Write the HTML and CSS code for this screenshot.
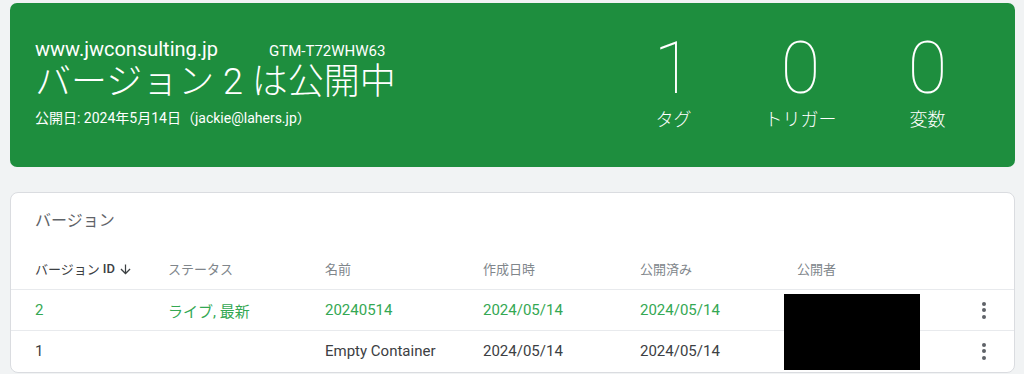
FILE: index.html
```html
<!DOCTYPE html>
<html lang="ja">
<head>
<meta charset="utf-8">
<link rel="stylesheet" href="styles.css">
</head>
<body>
<div class="page">
  <section class="hero">
    <div class="hero-info">
      <div class="hero-top">
        <span class="domain">www.jwconsulting.jp</span>
        <span class="gtm">GTM-T72WHW63</span>
      </div>
      <h1 class="hero-title">バージョン 2 は公開中</h1>
      <div class="hero-date">公開日: 2024年5月14日（jackie@lahers.jp）</div>
    </div>
    <div class="stats">
      <div class="stat"><div class="stat-num">1</div><div class="stat-label">タグ</div></div>
      <div class="stat"><div class="stat-num">0</div><div class="stat-label">トリガー</div></div>
      <div class="stat"><div class="stat-num">0</div><div class="stat-label">変数</div></div>
    </div>
  </section>

  <section class="versions">
    <h2 class="versions-title">バージョン</h2>
    <div class="row head">
      <div class="cell sorted">バージョン <b>ID</b> <svg class="arrow" viewBox="0 0 24 24" width="15" height="15"><path d="M20 12l-1.41-1.41L13 16.17V4h-2v12.17l-5.58-5.59L4 12l8 8 8-8z" fill="#3c4043"/></svg></div>
      <div class="cell">ステータス</div>
      <div class="cell">名前</div>
      <div class="cell">作成日時</div>
      <div class="cell">公開済み</div>
      <div class="cell">公開者</div>
      <div class="cell"></div>
    </div>
    <div class="row live">
      <div class="cell">2</div>
      <div class="cell">ライブ, 最新</div>
      <div class="cell">20240514</div>
      <div class="cell">2024/05/14</div>
      <div class="cell">2024/05/14</div>
      <div class="cell"></div>
      <div class="cell menu"><span class="kebab"><i></i><i></i><i></i></span></div>
    </div>
    <div class="row">
      <div class="cell">1</div>
      <div class="cell"></div>
      <div class="cell">Empty Container</div>
      <div class="cell">2024/05/14</div>
      <div class="cell">2024/05/14</div>
      <div class="cell"></div>
      <div class="cell menu"><span class="kebab"><i></i><i></i><i></i></span></div>
    </div>
    <div class="redact"></div>
  </section>
</div>
</body>
</html>
```

FILE: styles.css
```css
* { box-sizing: border-box; }
html, body {
  margin: 0;
  padding: 0;
  background: #f1f3f4;
  font-family: Roboto, "Noto Sans CJK JP", sans-serif;
}
.page {
  padding: 3px 9px 0 10px;
  display: flex;
  flex-direction: column;
  gap: 25px;
}
.hero {
  background: #1e8e3e;
  border-radius: 7px;
  height: 164px;
  color: #fff;
  display: flex;
  justify-content: space-between;
  padding: 0 24px 0 25px;
}
.hero-info {
  padding-top: 33px;
}
.hero-top {
  display: flex;
  align-items: baseline;
  gap: 51px;
  line-height: 26px;
}
.domain {
  font-size: 20px;
}
.gtm {
  font-size: 15px;
  font-weight: 400;
}
.hero-title {
  margin: 0;
  font-family: Roboto, "Noto Sans CJK JP", sans-serif;
  font-weight: 300;
  font-size: 36px;
  line-height: 42px;
  margin-top: -3px;
}
.hero-date {
  font-size: 14px;
  line-height: 20px;
  margin-top: 5px;
}
.stats {
  display: flex;
  padding-top: 36px;
}
.stat {
  width: 127px;
  text-align: center;
}
.stat-num {
  font-size: 72px;
  font-weight: 100;
  line-height: 60px;
}
.stat-label {
  font-family: "Noto Sans CJK JP", sans-serif;
  font-weight: 300;
  font-size: 18px;
  line-height: 24px;
  margin-top: 7px;
}
.versions {
  position: relative;
  background: #fff;
  border: 1px solid #dadce0;
  border-radius: 8px;
  height: 181px;
  overflow: hidden;
}
.versions-title {
  margin: 0;
  font-family: "Noto Sans CJK JP", sans-serif;
  font-weight: 400;
  font-size: 16px;
  line-height: 24px;
  color: #5f6368;
  padding: 14px 24px 0;
}
.row {
  display: grid;
  grid-template-columns: 133px 157px 158px 157px 157px 1fr 40px;
  align-items: center;
  height: 41px;
  padding-left: 24px;
  border-top: 1px solid #e8eaed;
  font-size: 15px;
  color: #3c4043;
}
.row.head {
  border-top: none;
  height: 58px;
  padding-top: 17px;
  font-size: 13px;
  color: #80868b;
  font-family: "Noto Sans CJK JP", Roboto, sans-serif;
}
.row.head .sorted {
  color: #3c4043;
  display: flex;
  align-items: center;
  gap: 3px;
}
.row.head .sorted b {
  font-family: Roboto, sans-serif;
  font-weight: 500;
}
.row.head .sorted .arrow { margin-top: 1px; }
.row.live { color: #34a853; }
.cell { white-space: nowrap; }
.menu {
  display: flex;
  padding-left: 8px;
}
.kebab {
  display: flex;
  flex-direction: column;
  gap: 2.5px;
}
.kebab i {
  display: block;
  width: 4px;
  height: 4px;
  border-radius: 50%;
  background: #5f6368;
}
.redact {
  position: absolute;
  left: 773px;
  top: 101px;
  width: 136px;
  height: 76px;
  background: #000;
}
```
